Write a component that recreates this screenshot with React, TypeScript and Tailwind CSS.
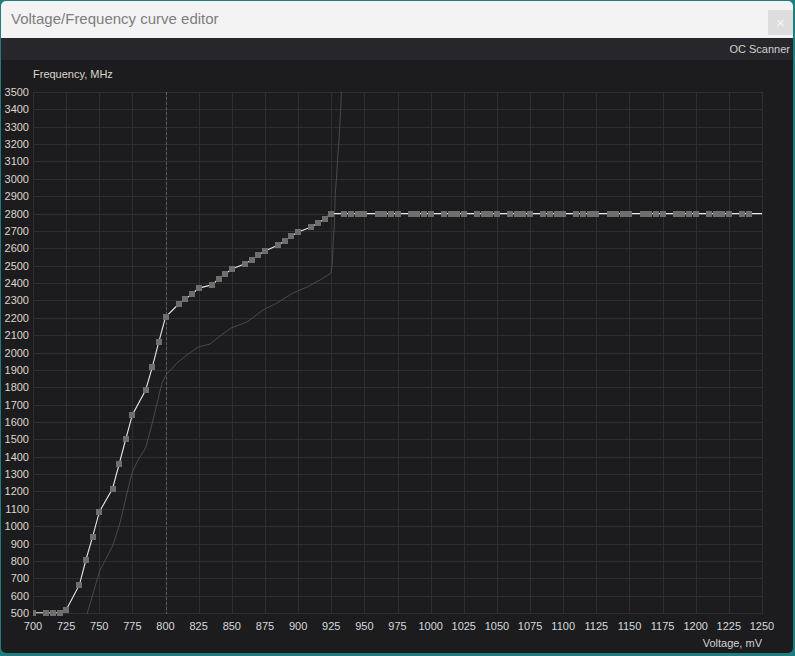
import React from 'react';

// plot area in page pixels
const PX0 = 33;
const PX1 = 762;
const PY0 = 92;
const PY1 = 613;

const vx = (v: number) => PX0 + ((v - 700) * (PX1 - PX0)) / 550;
const fy = (f: number) => PY1 - ((f - 500) * (PY1 - PY0)) / 3000;

const rising: [number, number][] = [
  [700, 502], [710, 502], [715, 502], [720, 502], [725, 517],
  [735, 662], [740, 808], [745, 938], [750, 1082],
  [760, 1216], [765, 1358], [770, 1502], [775, 1642],
  [785, 1784], [790, 1916], [795, 2062], [800, 2204],
  [810, 2279], [815, 2308], [820, 2337], [825, 2371],
  [835, 2389], [840, 2423], [845, 2452], [850, 2481],
  [860, 2511], [865, 2533], [870, 2561], [875, 2584],
  [885, 2619], [890, 2642], [895, 2671], [900, 2694],
  [910, 2723], [915, 2746], [920, 2769], [925, 2800],
];

const flat: [number, number][] = [];
for (let b = 925; b < 1250; b += 25) {
  for (const d of [10, 15, 20, 25]) {
    if (b + d <= 1240) flat.push([b + d, 2800]);
  }
}

const points = [...rising, ...flat];

// measured reference curve, page pixels
const refCurve: [number, number][] = [
  [87, 614], [100, 570], [106, 559], [113, 545], [120, 523], [127, 493],
  [132, 473], [137, 462], [146, 447], [153, 420], [162, 383], [166, 375],
  [177, 363], [187, 355], [198, 347], [210, 344], [220, 336], [231, 328],
  [247, 322], [263, 310], [277, 303], [293, 293], [307, 287], [320, 280],
  [331, 273], [332.3, 263], [333.3, 240], [334.3, 227], [335.3, 193],
  [336.7, 175], [337.7, 157], [339, 140], [340, 122], [341, 103], [341.3, 92],
];

const yTicks = Array.from({ length: 31 }, (_, i) => 500 + i * 100);
const xTicks = Array.from({ length: 23 }, (_, i) => 700 + i * 25);

const crisp = (n: number) => Math.round(n) + 0.5;

function CurveChart() {
  const mainLine = [...points, [1250, 2800] as [number, number]]
    .map(([v, f]) => `${vx(v).toFixed(1)},${fy(f).toFixed(1)}`)
    .join(' ');

  return (
    <svg
      width={792}
      height={593}
      viewBox="1 60 792 593"
      className="block"
      fontFamily="'Liberation Sans', Arial, sans-serif"
    >
      <defs>
        <clipPath id="plot">
          <rect x={PX0} y={80} width={PX1 - PX0 + 10} height={545} />
        </clipPath>
      </defs>

      {/* grid */}
      {yTicks.map((f) => (
        <line key={`h${f}`} x1={PX0} x2={PX1 + 1} y1={crisp(fy(f))} y2={crisp(fy(f))} stroke="#2f2f32" strokeWidth={1} />
      ))}
      {xTicks.map((v) => (
        <line key={`v${v}`} x1={crisp(vx(v))} x2={crisp(vx(v))} y1={PY0} y2={PY1 + 1} stroke="#2f2f32" strokeWidth={1} />
      ))}
      <line
        x1={crisp(vx(800))}
        x2={crisp(vx(800))}
        y1={PY0}
        y2={PY1 + 1}
        stroke="#5c5c5c"
        strokeWidth={1}
        strokeDasharray="3 2"
      />

      {/* labels */}
      <text x={33} y={78} fontSize={11} fill="#ddd6cc">Frequency, MHz</text>
      {yTicks.map((f) => (
        <text key={`yl${f}`} x={29} y={fy(f) + 4} fontSize={11} textAnchor="end" fill="#ddd6cc">
          {f}
        </text>
      ))}
      {xTicks.map((v) => (
        <text key={`xl${v}`} x={vx(v)} y={630} fontSize={11} textAnchor="middle" fill="#d4d8dc">
          {v}
        </text>
      ))}
      <text x={762} y={647} fontSize={11} textAnchor="end" fill="#d2d2d2">Voltage, mV</text>

      <g clipPath="url(#plot)">
        {/* reference curve */}
        <polyline
          points={refCurve.map(([x, y]) => `${x},${y}`).join(' ')}
          fill="none"
          stroke="#4a4a4c"
          strokeWidth={1}
        />
        {/* editable curve */}
        <polyline points={mainLine} fill="none" stroke="#e8e8e8" strokeWidth={1.1} />
        {points.map(([v, f]) => (
          <rect
            key={`p${v}`}
            x={Math.round(vx(v) - 3)}
            y={Math.round(fy(f) - 3)}
            width={6}
            height={6}
            fill="#6e6e6e"
            shapeRendering="crispEdges"
          />
        ))}
      </g>
    </svg>
  );
}

export default function App() {
  return (
    <div className="w-[795px] h-[656px] bg-[#1d7d7f] pt-px pl-px pr-[2px] pb-[3px] font-['Liberation_Sans',Arial,sans-serif]">
      <div className="h-full flex flex-col rounded-[5px] overflow-hidden">
        {/* Title bar */}
        <div className="h-[37px] shrink-0 bg-[#f3f3f3] flex items-center justify-between pl-[10px]">
          <span className="text-[15px] text-[#7d7d7d]">Voltage/Frequency curve editor</span>
          <button className="w-[25px] h-[25px] mt-[6px] bg-[#dddddd] text-[#f7f7f7] text-[15px] leading-none flex items-center justify-center">
            ×
          </button>
        </div>

        {/* Toolbar */}
        <div className="h-[22px] shrink-0 bg-[#27272b] flex items-center justify-end pr-[3px]">
          <span className="text-[11px] text-[#cfcfcf]">OC Scanner</span>
        </div>

        {/* Chart */}
        <div className="flex-1 bg-[#1c1c1e] overflow-hidden">
          <CurveChart />
        </div>
      </div>
    </div>
  );
}
